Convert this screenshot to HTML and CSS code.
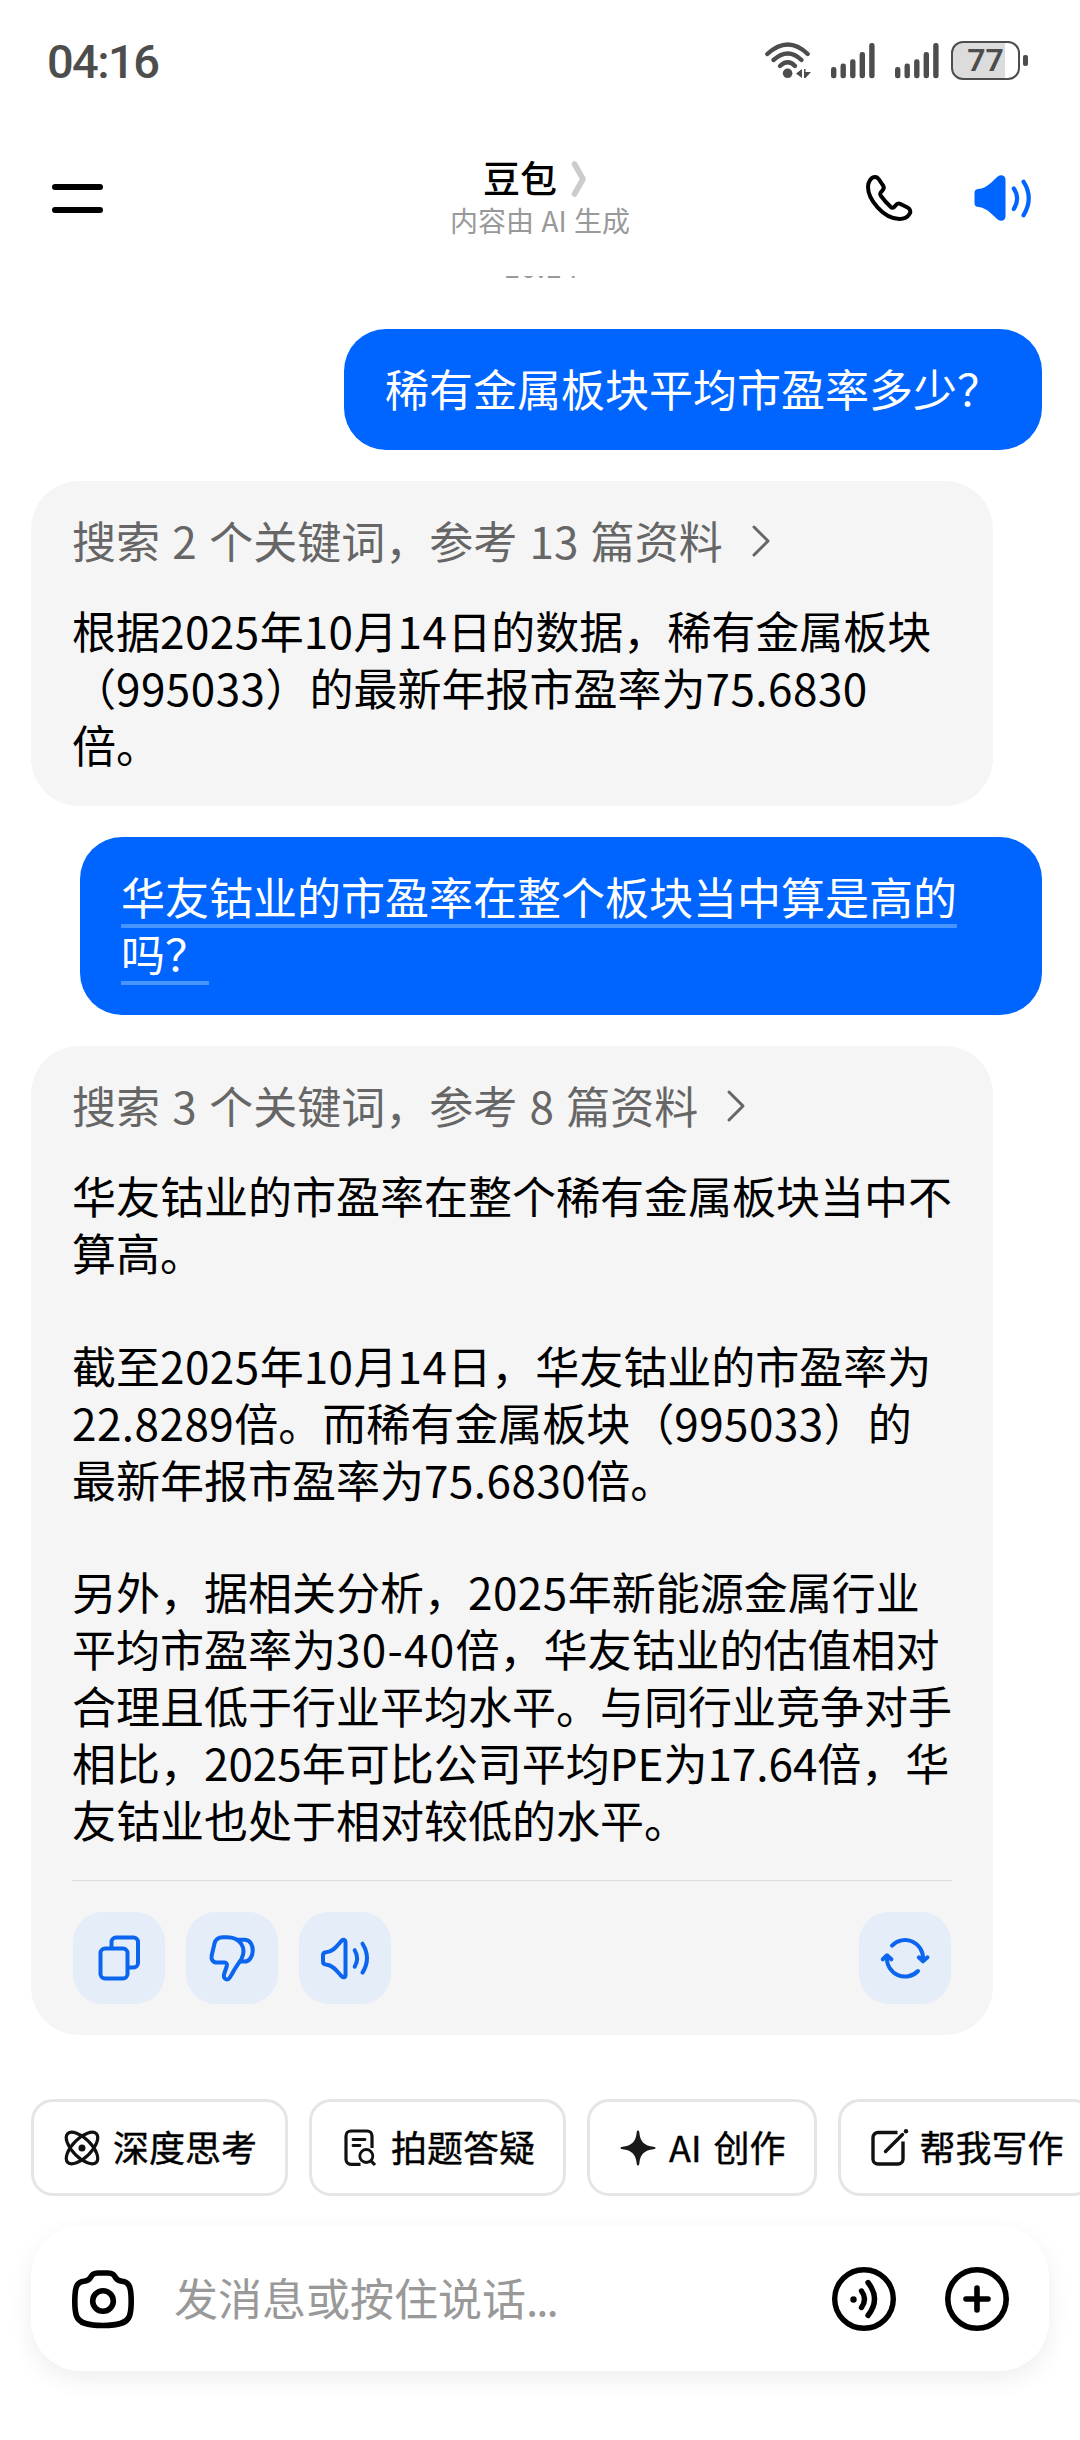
FILE: index.html
```html
<!DOCTYPE html>
<html lang="zh-CN">
<head>
  <meta charset="UTF-8">
  <meta name="viewport" content="width=device-width, initial-scale=1.0">
  <title>豆包</title>
  <link rel="stylesheet" href="styles.css">
</head>
<body>
  <!-- Status bar -->
  <div class="status-bar">
    <span class="clock">04:16</span>
    <div class="status-icons">
      <svg class="wifi" width="48" height="40" viewBox="0 0 48 40" fill="none" stroke="#4d4d4d" stroke-width="4.4" stroke-linecap="round">
        <path d="M3.3 14Q24 -5 43.7 14M9.5 20Q24 7 37.5 20M16 26Q24 18.5 31 26"/>
        <circle cx="23.6" cy="33.3" r="4.8" fill="#4d4d4d" stroke="none"/>
        <path d="M32 33.5L38 29V38ZM40 29V38L41.5 38L47 32H41.5V29Z" fill="#4d4d4d" stroke="none"/>
      </svg>
      <svg class="signal" width="44" height="36" viewBox="0 0 44 36" fill="#4d4d4d">
        <rect x="0" y="24" width="5.4" height="11.3" rx="2.4"/>
        <rect x="9.5" y="20.6" width="5.4" height="14.7" rx="2.4"/>
        <rect x="19.1" y="16.3" width="5.4" height="19" rx="2.4"/>
        <rect x="28.6" y="9" width="5.4" height="26.3" rx="2.4"/>
        <rect x="38.2" y="0" width="5.4" height="35.3" rx="2.4"/>
      </svg>
      <svg class="signal" width="44" height="36" viewBox="0 0 44 36" fill="#4d4d4d">
        <rect x="0" y="24" width="5.4" height="11.3" rx="2.4"/>
        <rect x="9.5" y="20.6" width="5.4" height="14.7" rx="2.4"/>
        <rect x="19.1" y="16.3" width="5.4" height="19" rx="2.4"/>
        <rect x="28.6" y="9" width="5.4" height="26.3" rx="2.4"/>
        <rect x="38.2" y="0" width="5.4" height="35.3" rx="2.4"/>
      </svg>
      <div class="battery"><span>77</span></div>
      <div class="battery-cap"></div>
    </div>
  </div>

  <!-- Header -->
  <header class="header">
    <div class="menu-button">
      <span class="bar"></span>
      <span class="bar"></span>
    </div>
    <div class="header-title">
      <div class="title-row">
        <h1>豆包</h1>
        <svg width="16" height="38" viewBox="0 0 16 38" fill="none" stroke="#ccc" stroke-width="5.6" stroke-linecap="round" stroke-linejoin="round">
          <path d="M3.5 4L12 19L3.5 34"/>
        </svg>
      </div>
      <p class="subtitle">内容由 AI 生成</p>
    </div>
    <div class="header-actions">
      <svg width="47" height="46" viewBox="0 0 47 46" fill="none" stroke="#000" stroke-width="4" stroke-linejoin="round">
        <path d="M9 2C11 2 12 3 13 4.5L17.3 10.8C18.5 12.8 18 14 16 16C13.8 18 13.5 19 15 21C18.5 25.8 21.5 29 24.8 32C26.5 33.5 28 32.5 29.5 30.5C31 28.5 32.5 28 34.5 29L41.5 32.5C44.5 34 45 37 43.5 39C41 43 37 44 33.5 44C17 43.5 2 24 2 12C2 7 5 2 9 2Z"/>
      </svg>
      <svg width="58" height="46" viewBox="0 0 58 46" fill="none" stroke="#0065ff" stroke-width="4.2" stroke-linecap="round">
        <path d="M0.5 18C0.5 15.5 2 14 4.5 14C13 13.5 18 6.5 24 1.3C27 -1 31.5 0.5 31.5 4.5V41.5C31.5 45.5 27 47 24 44.7C18 39.5 13 33 4.5 32C2 32 0.5 30.5 0.5 28Z" fill="#0065ff" stroke="none"/>
        <path d="M39.8 13.5Q46.5 23 39.8 34M49.5 6.7Q60 23 49.5 40.3"/>
      </svg>
    </div>
  </header>

  <!-- Conversation -->
  <main class="chat">
    <div class="time-row"><span>10:14</span></div>

    <div class="bubble user">稀有金属板块平均市盈率多少？</div>

    <div class="bubble bot">
      <div class="source">
        <span>搜索 2 个关键词，参考 13 篇资料</span>
        <svg width="20" height="32" viewBox="0 0 20 32" fill="none" stroke="#666" stroke-width="3" stroke-linecap="round" stroke-linejoin="round">
          <path d="M3 2L17 16L3 30"/>
        </svg>
      </div>
      <p>根据<span class="num">2025</span>年<span class="num">10</span>月<span class="num">14</span>日的数据，稀有金属板块<br>（<span class="num">995033</span>）的最新年报市盈率为<span class="num">75.6830</span><br>倍。</p>
    </div>

    <div class="bubble user wide"><span class="underlined">华友钴业的市盈率在整个板块当中算是高的<br>吗？</span></div>

    <div class="bubble bot">
      <div class="source">
        <span>搜索 3 个关键词，参考 8 篇资料</span>
        <svg width="20" height="32" viewBox="0 0 20 32" fill="none" stroke="#666" stroke-width="3" stroke-linecap="round" stroke-linejoin="round">
          <path d="M3 2L17 16L3 30"/>
        </svg>
      </div>
      <p>华友钴业的市盈率在整个稀有金属板块当中不<br>算高。</p>
      <p>截至<span class="num">2025</span>年<span class="num">10</span>月<span class="num">14</span>日，华友钴业的市盈率为<br><span class="num">22.8289</span>倍。而稀有金属板块（<span class="num">995033</span>）的<br>最新年报市盈率为<span class="num">75.6830</span>倍。</p>
      <p>另外，据相关分析，<span class="num">2025</span>年新能源金属行业<br>平均市盈率为<span class="num range">30-40</span>倍，华友钴业的估值相对<br>合理且低于行业平均水平。与同行业竞争对手<br>相比，2025年可比公司平均PE为17.64倍，华<br>友钴业也处于相对较低的水平。</p>
      <div class="toolbar">
        <div class="tool">
          <svg viewBox="0 0 92 92">
            <rect x="27.5" y="36.5" width="27" height="30" rx="4.5"/>
            <path d="M38.5 36V30A4.5 4.5 0 0 1 43 25.5H60.5A4.5 4.5 0 0 1 65 30V51A4.5 4.5 0 0 1 60.5 55.5H55"/>
          </svg>
        </div>
        <div class="tool">
          <svg viewBox="0 0 92 92">
            <path d="M37 25.3H41C48 25.3 52 27.5 55 31.5C58 36 58 42 55.5 47C53 51 49.5 55 46 62L43.5 66C41.5 69 37 67 38 62.5L40.8 54C41.3 52 40.5 50.6 38.5 50.6H31C27 50.6 24.8 47.5 25.7 43.5L28.5 31.5C29.5 27.5 32.5 25.3 37 25.3Z"/>
            <path d="M51 27.8H59C70 28.5 69 50 58 49.6H54.5"/>
          </svg>
        </div>
        <div class="tool">
          <svg viewBox="0 0 92 92">
            <path d="M24 43.5C24 41.5 25 40.5 27 40.3C34.5 40 38.5 33 42.7 28.7C44.5 27 46.5 27.8 46.5 30V63C46.5 65.5 44.5 66 42.7 64.3C38.5 60 34.5 53 27 52.5C25 52.3 24 51.5 24 49.5Z"/>
            <path d="M55.7 38.2Q60.5 46.5 55.7 54.7M63.5 31.7Q72.5 46 63.5 60.6"/>
          </svg>
        </div>
        <div class="tool refresh">
          <svg viewBox="0 0 92 92">
            <path d="M33 33.6A18 18 0 0 1 64 47M59.8 45.3L64 49.3L68.5 45.3M59 59A18 18 0 0 1 28 45.6M23.8 47.3L28 43.3L32.4 47.3"/>
          </svg>
        </div>
      </div>
    </div>
  </main>

  <!-- Shortcut chips -->
  <div class="chips">
    <div class="chip">
      <svg viewBox="0 0 36 36" fill="none" stroke="#111" stroke-width="3.2">
        <ellipse cx="18" cy="18" rx="20.2" ry="9.3" transform="rotate(45 18 18)"/>
        <ellipse cx="18" cy="18" rx="20.2" ry="9.3" transform="rotate(-45 18 18)"/>
        <circle cx="18" cy="18" r="3.5" fill="#111" stroke="none"/>
      </svg>
      <span>深度思考</span>
    </div>
    <div class="chip">
      <svg viewBox="0 0 36 36" fill="none" stroke="#111" stroke-width="3.2">
        <path d="M18.5 34.3H9A5 5 0 0 1 4 29.3V6A5 5 0 0 1 9 1H25A5 5 0 0 1 30 6V18"/>
        <path d="M11 9.5H23M11 15.5H18" stroke-linecap="round" stroke-width="2.8"/>
        <circle cx="24.3" cy="26" r="6.5" stroke-width="2.8"/>
        <path d="M29 30.8L33 35"/>
      </svg>
      <span>拍题答疑</span>
    </div>
    <div class="chip">
      <svg viewBox="0 0 36 36" fill="#1a1a1a">
        <path d="M18 0.5C19.2 0.5 19.3 2 19.5 4C20.5 11.5 24.5 15.5 32 16.5C34 16.7 35.5 17 35.5 18S34 19.3 32 19.5C24.5 20.5 20.5 24.5 19.5 32C19.3 34 19.2 35.5 18 35.5S16.7 34 16.5 32C15.5 24.5 11.5 20.5 4 19.5C2 19.3 0.5 19 0.5 18S2 16.7 4 16.5C11.5 15.5 15.5 11.5 16.5 4C16.7 2 16.8 0.5 18 0.5Z"/>
      </svg>
      <span>AI 创作</span>
    </div>
    <div class="chip">
      <svg viewBox="0 0 36 36" fill="none" stroke="#111" stroke-width="3.4">
        <path d="M26.5 2.5H7A5 5 0 0 0 2 7.5V29A5 5 0 0 0 7 34H27A5 5 0 0 0 32 29V11.5"/>
        <path d="M14.5 21.5L31.5 4.5" stroke-linecap="round"/>
        <circle cx="35" cy="1.3" r="2.2" fill="#111" stroke="none"/>
      </svg>
      <span>帮我写作</span>
    </div>
  </div>

  <!-- Message input -->
  <div class="input-bar">
    <svg width="62" height="62" viewBox="0 0 62 62" fill="none" stroke="#000" stroke-width="5.6" stroke-linejoin="round">
      <path d="M26 5H36C41 5 42 7 43.5 9.5C45 12 47 13 50 13.3C57 14 58.5 19 59 27C59.5 36 59.5 42 57.5 48C55 55 47 57.5 31 57.5S7 55 4.5 48C2.5 42 2.5 36 3 27C3.5 19 5 14 12 13.3C15 13 17 12 18.5 9.5C20 7 21 5 26 5Z"/>
      <circle cx="31" cy="33" r="10.3"/>
    </svg>
    <span class="placeholder">发消息或按住说话<span class="dots">...</span></span>
    <svg width="64" height="64" viewBox="0 0 64 64" fill="none" stroke="#000" stroke-width="5.4" stroke-linecap="round">
      <circle cx="32" cy="32" r="29.3"/>
      <circle cx="21.5" cy="32.5" r="3.2" fill="#000" stroke="none"/>
      <path d="M29.5 24Q35.5 32 29.5 40.5M36 15.5Q49 32 36 48.5"/>
    </svg>
    <svg width="64" height="64" viewBox="0 0 64 64" fill="none" stroke="#000" stroke-width="5.6" stroke-linecap="round">
      <circle cx="32" cy="32" r="29.2"/>
      <path d="M32 21V43M21 32H43"/>
    </svg>
  </div>
</body>
</html>
```
FILE: styles.css
```css
* {
  margin: 0;
  padding: 0;
  box-sizing: border-box;
}

body {
  width: 1080px;
  height: 2440px;
  overflow: hidden;
  background: #fff;
  color: #000;
  font-family: "Noto Sans CJK SC", sans-serif;
  font-size: 44px;
  line-height: 57px;
  text-spacing-trim: space-all;
}

svg {
  display: block;
  flex-shrink: 0;
  overflow: visible;
}

/* Status bar */
.status-bar {
  display: flex;
  justify-content: space-between;
  height: 120px;
  padding: 40px 52px 0 47px;
  color: #4d4d4d;
  font-family: Roboto, sans-serif;
}

.clock {
  height: 44px;
  font-size: 47px;
  line-height: 44px;
  font-weight: 500;
  letter-spacing: -1.6px;
}

.status-icons {
  display: flex;
  align-items: flex-start;
}

.wifi {
  margin-right: 19px;
}

.signal {
  margin: 3px 20px 0 0;
}

.signal + .battery {
  margin-left: -8px;
}

.battery {
  width: 69px;
  height: 39px;
  margin-top: 1px;
  border: 2.5px solid #4d4d4d;
  border-radius: 12px;
  background: linear-gradient(to right, #dcdcdc 80%, #fff 80%);
  font-size: 32px;
  line-height: 35px;
  font-weight: 600;
  text-align: center;
}

.battery-cap {
  width: 5px;
  height: 11px;
  margin: 15px 0 0 3px;
  border-radius: 2px;
  background: #4d4d4d;
}

/* Header */
.header {
  display: grid;
  grid-template-columns: 1fr 200px 1fr;
  height: 156px;
  padding: 0 50px;
}

.menu-button {
  display: flex;
  flex-direction: column;
  gap: 17px;
  padding: 64px 0 0 2px;
}

.bar {
  width: 51px;
  height: 6px;
  border-radius: 3px;
  background: #000;
}

.header-title {
  display: flex;
  flex-direction: column;
  align-items: center;
  padding-top: 35px;
}

.title-row {
  display: flex;
  align-items: center;
  gap: 14px;
  height: 48px;
  margin-right: 10px;
}

.title-row h1 {
  height: 48px;
  font-size: 37px;
  line-height: 44px;
  font-weight: 500;
}

.subtitle {
  color: #999;
  font-size: 28px;
  line-height: 34px;
  word-spacing: 1px;
  white-space: nowrap;
}

.header-actions {
  display: flex;
  justify-content: flex-end;
  gap: 61px;
  padding: 55px 0 0;
  margin-right: -2px;
}

/* Conversation */
.chat {
  display: flex;
  flex-direction: column;
  align-items: flex-start;
  gap: 31px;
  height: 1759px;
  padding: 0 38px 0 31px;
}

/* timestamp scrolled under the header, only its bottom edge shows */
.time-row {
  display: flex;
  align-items: flex-end;
  justify-content: center;
  align-self: center;
  width: 200px;
  height: 22px;
  padding-left: 9px;
  overflow: hidden;
  color: #999;
  font-size: 30px;
  line-height: 65px;
}

.bubble {
  border-radius: 48px;
  white-space: nowrap;
}

.user {
  align-self: flex-end;
  padding: 31px 41px 33px;
  border-radius: 42px;
  background: #0065ff;
  color: #fff;
}

.user.wide {
  width: 962px;
}

.underlined {
  text-decoration: underline 4px #4795ff;
  text-decoration-skip-ink: none;
  text-underline-offset: 9px;
}

.bot {
  width: 962px;
  padding: 31px 41px 33px;
  background: #f5f5f5;
}

.source {
  display: flex;
  align-items: center;
  gap: 28px;
  height: 57px;
  margin-bottom: 33px;
  color: #666;
  word-spacing: 2.5px;
}

.num {
  letter-spacing: 0.5px;
}

.range {
  letter-spacing: 1.3px;
}

.bot p + p {
  margin-top: 55.5px;
}

.toolbar {
  display: flex;
  gap: 21px;
  margin: 32px 0 -2px;
  padding: 31px 1px 0;
  border-top: 1px solid #dcdcdc;
}

.tool {
  width: 92px;
  height: 92px;
  border-radius: 30px;
  background: #e5edf8;
}

.tool svg {
  width: 92px;
  height: 92px;
  fill: none;
  stroke: #0b65ee;
  stroke-width: 4px;
  stroke-linecap: round;
  stroke-linejoin: round;
}

.refresh {
  margin-left: auto;
}

/* Shortcut chips */
.chips {
  display: flex;
  gap: 21px;
  width: 1080px;
  padding: 64px 0 0 31px;
  overflow: hidden;
}

.chip {
  display: flex;
  flex-shrink: 0;
  align-items: center;
  gap: 13px;
  height: 97px;
  padding: 0 28px 0 30px;
  border: 3px solid #e5e5e5;
  border-radius: 22px;
  font-size: 36px;
  line-height: 50px;
  word-spacing: 4px;
  white-space: nowrap;
  -webkit-text-stroke: 0.4px #000;
}

.chip span {
  margin-top: -3px;
}

.chip svg {
  width: 36px;
  height: 36px;
}

/* Message input */
.input-bar {
  display: flex;
  align-items: center;
  width: 1018px;
  height: 145px;
  margin: 30px 0 0 31px;
  padding: 0 40px 0 41px;
  border-radius: 50px;
  background: #fff;
  box-shadow: 0 8px 24px rgba(0, 0, 0, 0.07);
  gap: 49px;
}

.placeholder {
  flex: 1;
  margin: -3px 0 0 -9px;
  color: #999;
}

.dots {
  letter-spacing: -2px;
}
```
